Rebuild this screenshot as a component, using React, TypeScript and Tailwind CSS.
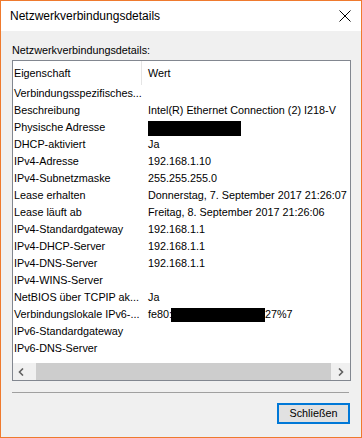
const rows: [string, string | null][] = [
  ['Verbindungsspezifisches...', ''],
  ['Beschreibung', 'Intel(R) Ethernet Connection (2) I218-V'],
  ['Physische Adresse', null],
  ['DHCP-aktiviert', 'Ja'],
  ['IPv4-Adresse', '192.168.1.10'],
  ['IPv4-Subnetzmaske', '255.255.255.0'],
  ['Lease erhalten', 'Donnerstag, 7. September 2017 21:26:07'],
  ['Lease läuft ab', 'Freitag, 8. September 2017 21:26:06'],
  ['IPv4-Standardgateway', '192.168.1.1'],
  ['IPv4-DHCP-Server', '192.168.1.1'],
  ['IPv4-DNS-Server', '192.168.1.1'],
  ['IPv4-WINS-Server', ''],
  ['NetBIOS über TCPIP ak...', 'Ja'],
  ['Verbindungslokale IPv6-...', 'ipv6'],
  ['IPv6-Standardgateway', ''],
  ['IPv6-DNS-Server', ''],
];

function Value({ v }: { v: string | null }) {
  if (v === null) {
    return <div className="mt-[1px] h-[15px] w-[93px] bg-black" />;
  }
  if (v === 'ipv6') {
    return (
      <div className="flex items-center">
        <span className="w-[23px]">fe80:</span>
        <div className="h-[14px] w-[94px] bg-black" />
        <span>27%7</span>
      </div>
    );
  }
  return <span className="whitespace-nowrap">{v}</span>;
}

export default function App() {
  return (
    <div
      className="flex h-[438px] w-[362px] flex-col border border-[#ef7a2e] bg-[#f0f0f0] text-[10.8px] text-black"
      style={{ fontFamily: '"Liberation Sans", Arial, sans-serif' }}
    >
      <div className="flex h-[30px] items-center justify-between bg-white pl-[9px] pr-[9px]">
        <span className="text-[12px] leading-none">Netzwerkverbindungsdetails</span>
        <svg width="12" height="12" viewBox="0 0 12 12" className="mr-[1px]">
          <path d="M0.5 0.5 L11.5 11.5 M11.5 0.5 L0.5 11.5" stroke="#000" strokeWidth="1" />
        </svg>
      </div>

      <div className="flex flex-1 flex-col px-[11px]">
        <div className="mt-[11px] h-[17px] leading-[17px]">Netzwerkverbindungsdetails:</div>

        <div className="mt-[1px] flex h-[321px] w-[339px] flex-col border border-[#828790] bg-white">
          <div className="flex h-[24px] items-center">
            <div className="w-[128px] shrink-0 pl-[1px]">Eigenschaft</div>
            <div className="h-full w-[1px] shrink-0 bg-[#e5e5e5]" />
            <div className="pl-[6px]">Wert</div>
          </div>
          <div className="flex-1">
            {rows.map(([k, v]) => (
              <div key={k} className="flex h-[17px] items-center">
                <div className="w-[135px] shrink-0 overflow-hidden whitespace-nowrap pl-[1px]">{k}</div>
                <Value v={v} />
              </div>
            ))}
          </div>
          <div className="flex h-[17px] items-center bg-[#f0f0f0]">
            <div className="flex w-[17px] shrink-0 justify-center">
              <svg width="7" height="8" viewBox="0 0 7 8">
                <path d="M5 0.5 L1.5 4 L5 7.5" stroke="#606060" strokeWidth="1.6" fill="none" />
              </svg>
            </div>
            <div className="ml-[6px] h-[17px] w-[295px] shrink-0 bg-[#cdcdcd]" />
            <div className="flex flex-1 justify-center">
              <svg width="7" height="8" viewBox="0 0 7 8">
                <path d="M2 0.5 L5.5 4 L2 7.5" stroke="#606060" strokeWidth="1.6" fill="none" />
              </svg>
            </div>
          </div>
        </div>

        <div className="mt-[11px] h-[1px] w-[337px] bg-[#a0a0a0]" />

        <div className="mt-[10px] flex justify-end">
          <button className="flex h-[21px] w-[73px] items-center justify-center border-2 border-[#0078d7] bg-[#e1e1e1] text-[10.8px]">
            Schließen
          </button>
        </div>
      </div>
    </div>
  );
}
